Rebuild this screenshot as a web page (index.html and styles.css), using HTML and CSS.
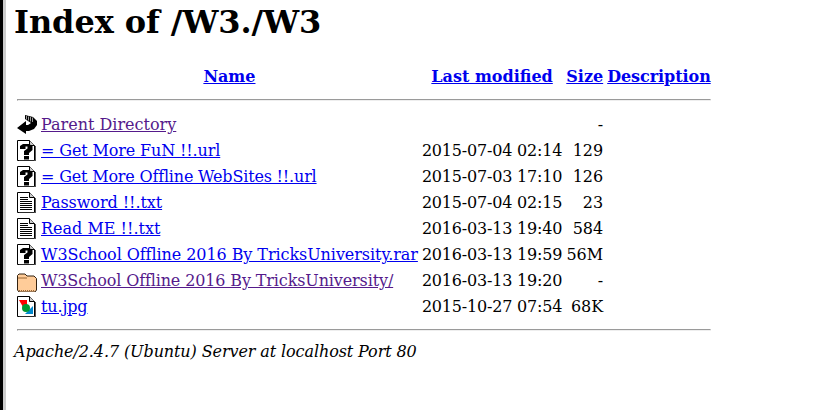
FILE: index.html
```html
<!DOCTYPE html>
<html lang="en">
<head>
    <meta charset="UTF-8">
    <title>Index of /W3./W3</title>
    <link rel="stylesheet" href="styles.css">
</head>
<body>
<svg class="u-defs" width="0" height="0">
    <defs>
        <symbol id="i-page" viewBox="0 0 20 22">
            <path d="M.5 1.500H12.500L17.500 6.500V21.500H.5Z" fill="#fff" stroke="#000"/>
            <path d="M12.500 1.500V6.500H17.500" fill="#ccc" stroke="#000"/>
            <path d="M18.500 7V22H2" fill="none" stroke="#555"/>
        </symbol>
        <symbol id="i-unknown" viewBox="0 1 20 22">
            <use href="#i-page"/>
            <path d="M3 10V7L6 5H12L15.500 7V11L12 14V16H7V12L10.500 9.500V7.500H8.500V10Z" fill="#000"/>
            <rect x="7" y="17" width="5" height="3.500" fill="#000"/>
        </symbol>
        <symbol id="i-text" viewBox="0 1 20 22">
            <use href="#i-page"/>
            <path d="M3 6.500H11M3 8.500H11M3 10.500H15M3 12.500H15M3 14.500H15M3 16.500H15M3 18.500H15" stroke="#000" fill="none"/>
        </symbol>
        <symbol id="i-back" viewBox="0 0 20 22">
            <path d="M8 1L16 3L20 7V11L17 15L12 17H9V20L0 14L9 7V11H11L14 9L8 5Z" fill="#000"/>
            <path d="M9.500 2V5.500M11.500 2.500V6.500M13.500 3V7.500M15.500 3.500V8" stroke="#999" fill="none"/>
        </symbol>
        <symbol id="i-folder" viewBox="0 -2 20 22">
            <path d="M.5 6V3.500L2 2H8L10 4H17L19.500 6.500V18L18 20H2L.5 18Z" fill="#fc9" stroke="#321"/>
            <path d="M2 18.500H18" stroke="#963" stroke-dasharray="1 1"/>
            <path d="M1 6H10" stroke="#963"/>
        </symbol>
        <symbol id="i-image" viewBox="0 1 20 22">
            <use href="#i-page"/>
            <path d="M2 5H10V12L6 12Z" fill="#f00"/>
            <path d="M16 11V19H8Z" fill="#08c"/>
            <circle cx="9" cy="13" r="4" fill="#093"/>
        </symbol>
    </defs>
</svg>
<h1>Index of /W3./W3</h1>
<table>
    <tr>
        <th class="c-icon"></th>
        <th><a href="#">Name</a></th>
        <th><a href="#">Last modified</a></th>
        <th><a href="#">Size</a></th>
        <th><a class="f-tight-1" href="#">Description</a></th>
    </tr>
    <tr><th colspan="5"><hr></th></tr>
    <tr>
        <td class="c-icon"><svg class="u-icon"><use href="#i-back"/></svg></td>
        <td><a class="f-visited" href="#">Parent Directory</a></td>
        <td></td>
        <td class="c-size">-</td>
        <td></td>
    </tr>
    <tr>
        <td class="c-icon"><svg class="u-icon"><use href="#i-unknown"/></svg></td>
        <td><a class="f-tight-2" href="#">= Get More FuN !!.url</a></td>
        <td class="c-date">2015-07-04 02:14</td>
        <td class="c-size">129</td>
        <td></td>
    </tr>
    <tr>
        <td class="c-icon"><svg class="u-icon"><use href="#i-unknown"/></svg></td>
        <td><a class="f-tight-3" href="#">= Get More Offline WebSites !!.url</a></td>
        <td class="c-date">2015-07-03 17:10</td>
        <td class="c-size">126</td>
        <td></td>
    </tr>
    <tr>
        <td class="c-icon"><svg class="u-icon"><use href="#i-text"/></svg></td>
        <td><a class="f-tight-1" href="#">Password !!.txt</a></td>
        <td class="c-date">2015-07-04 02:15</td>
        <td class="c-size">23</td>
        <td></td>
    </tr>
    <tr>
        <td class="c-icon"><svg class="u-icon"><use href="#i-text"/></svg></td>
        <td><a href="#">Read ME !!.txt</a></td>
        <td class="c-date">2016-03-13 19:40</td>
        <td class="c-size">584</td>
        <td></td>
    </tr>
    <tr>
        <td class="c-icon"><svg class="u-icon"><use href="#i-unknown"/></svg></td>
        <td><a class="f-tight-1" href="#">W3School Offline 2016 By TricksUniversity.rar</a></td>
        <td class="c-date">2016-03-13 19:59</td>
        <td class="c-size">56M</td>
        <td></td>
    </tr>
    <tr>
        <td class="c-icon"><svg class="u-icon"><use href="#i-folder"/></svg></td>
        <td><a class="f-visited f-tight-2" href="#">W3School Offline 2016 By TricksUniversity/</a></td>
        <td class="c-date">2016-03-13 19:20</td>
        <td class="c-size">-</td>
        <td></td>
    </tr>
    <tr>
        <td class="c-icon"><svg class="u-icon"><use href="#i-image"/></svg></td>
        <td><a class="f-tight-2" href="#">tu.jpg</a></td>
        <td class="c-date">2015-10-27 07:54</td>
        <td class="c-size">68K</td>
        <td></td>
    </tr>
    <tr><th colspan="5"><hr class="u-hr-end"></th></tr>
</table>
<address>Apache/2.4.7 (Ubuntu) Server at localhost Port 80</address>
</body>
</html>
```

FILE: styles.css
```css
html {
    height: 100%;
    border-left: 3px solid #000;
    box-sizing: border-box;
    background: #fff;
}

body {
    min-height: 100%;
    box-sizing: border-box;
    margin: 0;
    padding: 3px 8px 8px;
    border-left: 3px solid #ccc;
    color: #000;
    font-family: "DejaVu Serif", serif;
    font-size: 16px;
}

a {
    color: #00e;
}

.f-visited {
    color: #551a8b;
}

/* the hinted text in the shot runs a bit narrower */
.f-tight-1 {
    letter-spacing: -.07px;
}

.f-tight-2 {
    letter-spacing: -.13px;
}

.f-tight-3 {
    letter-spacing: -.18px;
}

.u-defs {
    position: absolute;
}

.u-icon {
    display: block;
    width: 20px;
    height: 22px;
}

.c-date {
    letter-spacing: -.19px;
}

.c-size {
    text-align: right;
}

td {
    padding: 1px;
    vertical-align: top;
}

td.c-icon {
    padding: 0 1px 2px;
}

h1 {
    margin: 0 0 23px;
    font-size: 32px;
    letter-spacing: -.07px;
}

hr {
    margin: 9px 0 10px;
}

.u-hr-end {
    margin: 6px 0 8px;
}

address {
    letter-spacing: -.1px;
}
```
